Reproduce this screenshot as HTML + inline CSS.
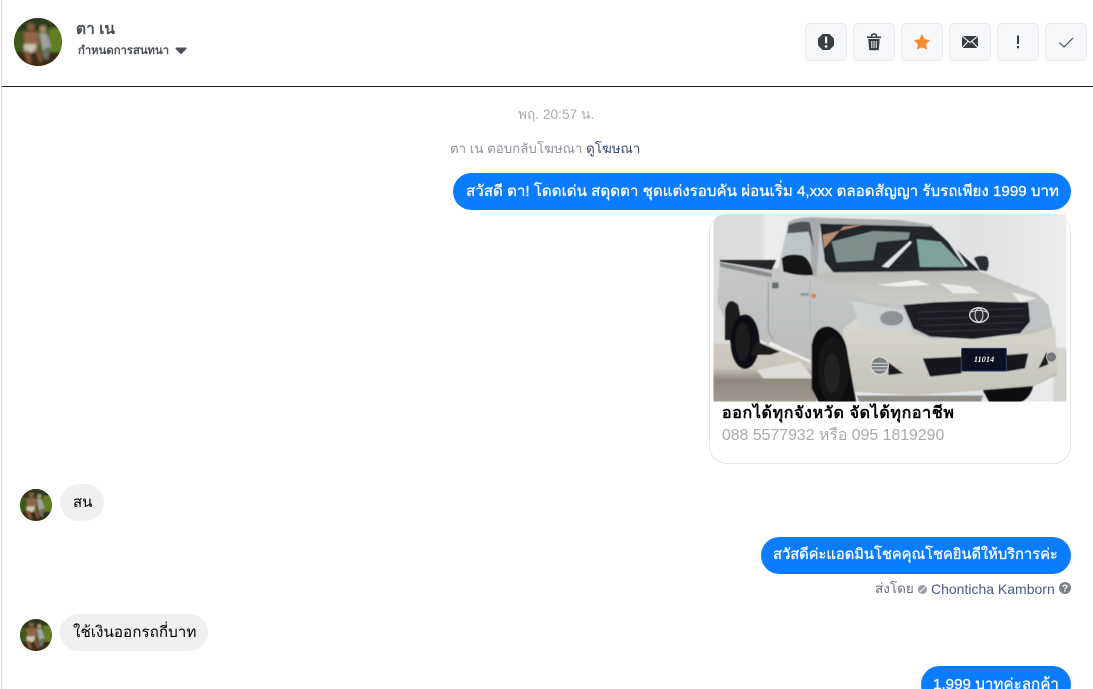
<!DOCTYPE html>
<html lang="th">
<head>
<meta charset="utf-8">
<title>Chat</title>
<style>
html,body{margin:0;padding:0;background:#fff;width:1093px;height:689px;overflow:hidden}
#p{width:1093px;height:689px;position:relative;overflow:hidden;font-family:"Liberation Sans","Noto Sans CJK SC",Tahoma,sans-serif;color:#000;background:#fff}
.a{position:absolute;white-space:nowrap}
.btn{position:absolute;top:23px;width:40px;height:36px;border:1px solid #e9ebee;border-radius:5px;background:#f6f7f9}
.btn svg{position:absolute;left:0;top:0}
.b{position:absolute;height:37px;line-height:37px;border-radius:19px;white-space:nowrap;box-sizing:border-box;padding-left:13px}
.me{background:#0a7cff;color:#fff;-webkit-text-stroke:.3px #fff}
.you{background:#f1f0f0;color:#000}
.av{position:absolute}
</style>
</head>
<body>
<div id="p">
<svg width="0" height="0" style="position:absolute">
<defs>
<clipPath id="c"><circle cx="24" cy="24" r="24"/></clipPath>
<filter id="bl"><feGaussianBlur stdDeviation="1.200"/></filter>
<filter id="cb"><feGaussianBlur stdDeviation="1.300"/></filter>
<g id="face" clip-path="url(#c)">
<rect width="48" height="48" fill="#46551a"/>
<g filter="url(#bl)">
<rect x="-2" y="-2" width="52" height="15" fill="#2f3b1c"/>
<rect x="35" y="10" width="15" height="24" fill="#5f7f22"/>
<rect x="-2" y="14" width="12" height="20" fill="#3f5a1c"/>
<rect x="-2" y="34" width="52" height="16" fill="#3a2c12"/>
<path d="M10 14h14l1 14H11z" fill="#93634a"/>
<circle cx="17" cy="9" r="4" fill="#855a40"/>
<circle cx="29" cy="11" r="3.500" fill="#a98a6e"/>
<path d="M25 15h8l4 14-9 3z" fill="#9fa29e"/>
<path d="M10 26h12l1 6-6 3-7-2z" fill="#cbc4b2"/>
<path d="M9 32l5 13 4 0-3-12z" fill="#86593a"/>
<path d="M20 31l6 13 3-1-5-12z" fill="#86593a"/>
<path d="M27 31l9 1-2 10-5-2z" fill="#6f7167"/>
</g>
</g>
<linearGradient id="wall" x1="0" y1="0" x2="1" y2="0"><stop offset="0" stop-color="#dadbdb"/><stop offset=".135" stop-color="#dcdddd"/><stop offset=".15" stop-color="#ebecec"/><stop offset=".75" stop-color="#e1e2e2"/><stop offset="1" stop-color="#ebecec"/></linearGradient>
<linearGradient id="bump" x1="0" y1="0" x2="0" y2="1"><stop offset="0" stop-color="#d8d7d0"/><stop offset="1" stop-color="#c4c3bb"/></linearGradient>
<linearGradient id="hood" x1="0" y1="0" x2="0" y2="1"><stop offset="0" stop-color="#bdbcb8"/><stop offset="1" stop-color="#cdccc7"/></linearGradient>
<linearGradient id="side" x1="0" y1="0" x2="0" y2="1"><stop offset="0" stop-color="#c9cbcb"/><stop offset="1" stop-color="#b9bbbb"/></linearGradient>
<linearGradient id="floor" x1="0" y1="0" x2="0" y2="1"><stop offset="0" stop-color="#cfcbc2"/><stop offset=".4" stop-color="#c9c5bb"/><stop offset=".6" stop-color="#8e897d"/><stop offset="1" stop-color="#a29d91"/></linearGradient>
</defs>
</svg>

<div class="a" style="left:1px;top:0;width:1px;height:689px;background:#d9d9d9"></div>
<div class="a" style="left:2px;top:86px;width:1091px;height:1px;background:#1c1e21"></div>

<svg class="av" style="left:14px;top:18px" width="48" height="48" viewBox="0 0 48 48"><use href="#face"/></svg>
<div class="a" style="left:76px;top:21px;font-size:15.500px;line-height:18px;font-weight:700;color:#4b4f56">ตา เน</div>
<div class="a" style="left:78px;top:44px;font-size:11.300px;line-height:14px;font-weight:700;color:#4b4f56">กำหนดการสนทนา</div>
<svg class="a" style="left:175px;top:47px" width="12" height="8" viewBox="0 0 12 8"><path d="M.5 1.200Q.5 .5 1.300 .5H10.700Q11.500 .5 11.500 1.200 11.500 1.700 11 2.200L6.800 6.600Q6 7.400 5.200 6.600L1 2.200Q.5 1.700 .5 1.200z" fill="#4b4f56"/></svg>

<div class="btn" style="left:805px"><svg width="40" height="36" viewBox="0 0 40 36"><path d="M16.800 10.500h6.400l4.300 4.300v6.400l-4.300 4.300h-6.400l-4.300-4.300v-6.400z" fill="#3a3d42" stroke="#3a3d42" stroke-linejoin="round"/><rect x="19" y="12.500" width="2.200" height="7" rx="1" fill="#fff"/><circle cx="20.100" cy="22.400" r="1.300" fill="#fff"/></svg></div>
<div class="btn" style="left:853px"><svg width="40" height="36" viewBox="0 0 40 36"><path d="M13 12.500h14v1.600H13z" fill="#3a3d42"/><path d="M17.500 12.500c0-2 1-2.500 2.500-2.500s2.500.5 2.500 2.500" fill="none" stroke="#3a3d42" stroke-width="1.400"/><path d="M14.300 15h11.400l-.8 10q-.1 1.300-1.400 1.300h-7q-1.300 0-1.400-1.300z" fill="#3a3d42"/><path d="M17.800 17v7M20 17v7M22.200 17v7" stroke="#f6f7f9" stroke-width="1"/></svg></div>
<div class="btn" style="left:901px"><svg width="40" height="36" viewBox="0 0 40 36"><path d="M20 11l2.200 4.700 5.100.7-3.700 3.500.9 5.100-4.500-2.500-4.500 2.500.9-5.100-3.700-3.500 5.100-.7z" fill="#f58d2e" stroke="#f58d2e" stroke-linejoin="round"/></svg></div>
<div class="btn" style="left:949px"><svg width="40" height="36" viewBox="0 0 40 36"><rect x="12" y="12" width="16" height="12" rx="1" fill="#3a3d42"/><path d="M12 12l8 6.500L28 12M12 24l6-6.500M28 24l-6-6.500" fill="none" stroke="#f6f7f9" stroke-width="1.100"/></svg></div>
<div class="btn" style="left:997px"><svg width="40" height="36" viewBox="0 0 40 36"><rect x="19" y="11.500" width="2" height="8.500" fill="#3a3d42"/><rect x="19" y="22" width="2" height="2.300" fill="#3a3d42"/></svg></div>
<div class="btn" style="left:1045px"><svg width="40" height="36" viewBox="0 0 40 36"><path d="M13.500 18.500l4.500 4.500 9-9" fill="none" stroke="#4b4f56" stroke-width="1.200"/></svg></div>

<div class="a" style="left:518px;top:107px;font-size:13.700px;line-height:16px;color:#a9abaf">พฤ. 20:57 น.</div>
<div class="a" style="left:450px;top:141px;font-size:13.300px;line-height:16px;color:#90949c">ตา เน ตอบกลับโฆษณา <span style="color:#3b4a6f">ดูโฆษณา</span></div>

<div class="b me" style="left:453px;top:173px;width:618px;font-size:15.150px">สวัสดี ตา! โดดเด่น สดุดตา ชุดแต่งรอบคัน ผ่อนเริ่ม 4,xxx ตลอดสัญญา รับรถเพียง 1999 บาท</div>

<div class="a" style="left:709px;top:214px;width:362px;height:250px;box-sizing:border-box;border:1px solid #e3e5e8;border-radius:18px;background:#fff"></div>
<svg class="a" style="left:700px;top:205px" width="393" height="270" viewBox="0 0 1179 810">
<defs><clipPath id="img"><path d="M78 28H1100V590H40V66Q40 28 78 28z"/></clipPath></defs>
<g clip-path="url(#img)">
<rect x="40" y="28" width="1060" height="562" fill="url(#wall)"/>
<g filter="url(#cb)">
<rect x="30" y="416" width="320" height="180" fill="url(#floor)"/>
<path d="M170 495l130-25 40 50H190z" fill="#dedcd6"/>
<rect x="1060" y="428" width="50" height="170" fill="#d4d4d0"/>
<!-- body -->
<path d="M60 175L235 190 265 50Q285 35 340 38L600 44 690 58 840 200 1010 265 1045 300 1068 420 1070 510 1000 545 640 570 460 560 430 540 340 470 210 420 140 380 75 345 52 290z" fill="url(#side)"/>
<path d="M330 215L400 200 840 200 1000 265 960 290 720 292 640 300 510 290z" fill="url(#hood)"/>
<path d="M430 370L470 340 640 385 700 402 990 388 1065 365 1072 500 1000 545 640 570 470 560 425 470z" fill="url(#bump)"/>
<!-- bed -->
<path d="M60 165H228L215 195 60 170z" fill="#25272a"/>
<path d="M60 172L215 205V218L60 185z" fill="#8a8c8d"/>
<!-- rear wheel -->
<path d="M75 405V315Q85 270 115 300L135 405z" fill="#1a1a1c"/>
<ellipse cx="135" cy="410" rx="44" ry="82" fill="#101012"/>
<ellipse cx="128" cy="410" rx="22" ry="58" fill="#1c1c1f"/>
<path d="M170 410L240 440 210 450 150 450z" fill="#1b1b1c"/>
<path d="M210 410L330 465 330 472 205 420z" fill="#f0f0ee"/>
<path d="M205 230V380L222 405" fill="none" stroke="#94969a" stroke-width="3"/>
<path d="M330 225V370" fill="none" stroke="#a9abac" stroke-width="2"/>
<rect x="216" y="232" width="20" height="18" rx="4" fill="#6a6d70"/>
<rect x="302" y="264" width="24" height="9" fill="#8f9aa5"/>
<rect x="334" y="266" width="14" height="14" rx="5" fill="#d9885a"/>
<!-- front wheel -->
<path d="M335 550V420Q345 360 390 365 430 380 440 430L470 600H360z" fill="#0e0e10"/>
<ellipse cx="400" cy="495" rx="46" ry="100" fill="#151518"/>
<ellipse cx="396" cy="505" rx="24" ry="60" fill="#202023"/>
<!-- roof + windows -->
<path d="M262 55Q300 32 360 38L600 46 700 62 690 66 360 55 350 215 335 210 330 90z" fill="#a9abad"/>
<path d="M262 78L330 70 332 190 250 160z" fill="#bcc6c6"/>
<path d="M265 60Q300 45 330 52L342 130 325 80 262 85z" fill="#4f5256"/>
<path d="M245 160Q260 145 300 150 330 155 340 210 300 215 250 200z" fill="#141419"/>
<path d="M360 56L695 65 838 197 400 202 375 170z" fill="#22252a"/>
<path d="M395 110L520 78 630 82 625 103 530 112 520 165 410 172z" fill="#7f8f8c"/>
<path d="M650 102L722 110 795 186 660 186z" fill="#7fa29c"/>
<path d="M368 90L495 58 430 65 372 130z" fill="#b98f73"/>
<path d="M545 185L630 108 636 112 565 188zM715 65L795 185 802 183 725 65z" fill="#dfe7e6"/>
<path d="M822 160Q835 150 860 155 872 175 860 198L840 195z" fill="#2c2e32"/>
<!-- hood highlights -->
<path d="M530 240L650 225 690 240 590 245z" fill="#f0efeb"/>
<path d="M720 235L810 245 840 265 760 265z" fill="#e8e8e4"/>
<path d="M935 262L1010 280 960 292z" fill="#ecebe7"/>
<!-- headlights -->
<path d="M455 288L610 315 640 382 480 365z" fill="#cfd2d3"/>
<ellipse cx="575" cy="340" rx="35" ry="22" fill="#8e9396"/>
<path d="M990 295L1030 290 1047 355 990 368z" fill="#bfc3c5"/>
<!-- grille -->
<path d="M610 300L700 292 820 288 925 292 985 292 990 350 960 385 820 402 690 395 640 370z" fill="#1a1d22"/>
<path d="M650 322L975 310M655 342L978 332M665 362L972 352M680 380L955 372" stroke="#33363c" stroke-width="3"/>
<!-- lower intake -->
<path d="M668 460L785 455V505L690 515z" fill="#16181c"/>
<path d="M918 450L985 445 975 490 918 500z" fill="#16181c"/>
<path d="M565 472L610 505 565 510z" fill="#1a1b1e"/>
<path d="M1040 440L1015 490 1045 478z" fill="#1a1b1e"/>
<path d="M848 555L1000 543Q985 595 940 595H870z" fill="#0f0f11"/>
<path d="M470 572H850L840 595H480z" fill="#8e8c85"/>
</g>
<ellipse cx="837" cy="330" rx="28" ry="22" fill="#2b2d33" stroke="#d8d8d8" stroke-width="4"/>
<ellipse cx="837" cy="330" rx="12" ry="20" fill="none" stroke="#d8d8d8" stroke-width="3"/>
<path d="M812 322Q837 310 862 322" fill="none" stroke="#d8d8d8" stroke-width="3"/>
<rect x="785" y="430" width="134" height="68" rx="3" fill="#0d1022" stroke="#27345a" stroke-width="3"/>
<text x="852" y="471" font-family="Liberation Serif,serif" font-size="25" font-weight="700" font-style="italic" fill="#f2f2f2" text-anchor="middle">11014</text>
<circle cx="539" cy="482" r="26" fill="#7d8081" stroke="#dedede" stroke-width="3"/>
<path d="M517 475h44M515 485h48M518 495h42" stroke="#d6d6d6" stroke-width="3"/>
<circle cx="1054" cy="456" r="15" fill="#77797a" stroke="#cfcfcf" stroke-width="2"/>
</g>
</svg>
<div class="a" style="left:722px;top:404px;font-size:16px;letter-spacing:.65px;line-height:20px;font-weight:700;color:#000">ออกได้ทุกจังหวัด จัดได้ทุกอาชีพ</div>
<div class="a" style="left:722px;top:426px;font-size:15.850px;line-height:20px;color:#a8aaad">088 5577932 หรือ 095 1819290</div>

<svg class="av" style="left:20px;top:489px" width="32" height="32" viewBox="0 0 48 48"><use href="#face"/></svg>
<div class="b you" style="left:60px;top:484px;width:44px;font-size:15px">สน</div>

<div class="b me" style="left:761px;top:537px;width:310px;padding-left:12px;font-size:14.700px">สวัสดีค่ะแอดมินโชคคุณโชคยินดีให้บริการค่ะ</div>
<div class="a" style="left:875px;top:581px;font-size:13.500px;line-height:16px;color:#6b6f76">ส่งโดย</div>
<svg class="a" style="left:917px;top:584px" width="11" height="11" viewBox="0 0 11 11"><circle cx="5.500" cy="5.500" r="4.500" fill="#9b9da1"/><path d="M3 8l5-5" stroke="#fff" stroke-width="1"/></svg>
<div class="a" style="left:931px;top:581px;font-size:14px;line-height:16px;color:#4a5a82">Chonticha Kamborn</div>
<svg class="a" style="left:1059px;top:582px" width="12" height="12" viewBox="0 0 12 12"><circle cx="6" cy="6" r="6" fill="#7d8086"/><text x="6" y="9.500" font-size="10" font-weight="700" fill="#fff" text-anchor="middle" font-family="Liberation Sans,sans-serif">?</text></svg>

<svg class="av" style="left:20px;top:619px" width="32" height="32" viewBox="0 0 48 48"><use href="#face"/></svg>
<div class="b you" style="left:60px;top:614px;width:148px;font-size:15.250px">ใช้เงินออกรถกี่บาท</div>

<div class="b me" style="left:921px;top:666px;width:150px;padding-left:12px;font-size:15.200px">1,999 บาทค่ะลูกค้า</div>
</div>
</body>
</html>
